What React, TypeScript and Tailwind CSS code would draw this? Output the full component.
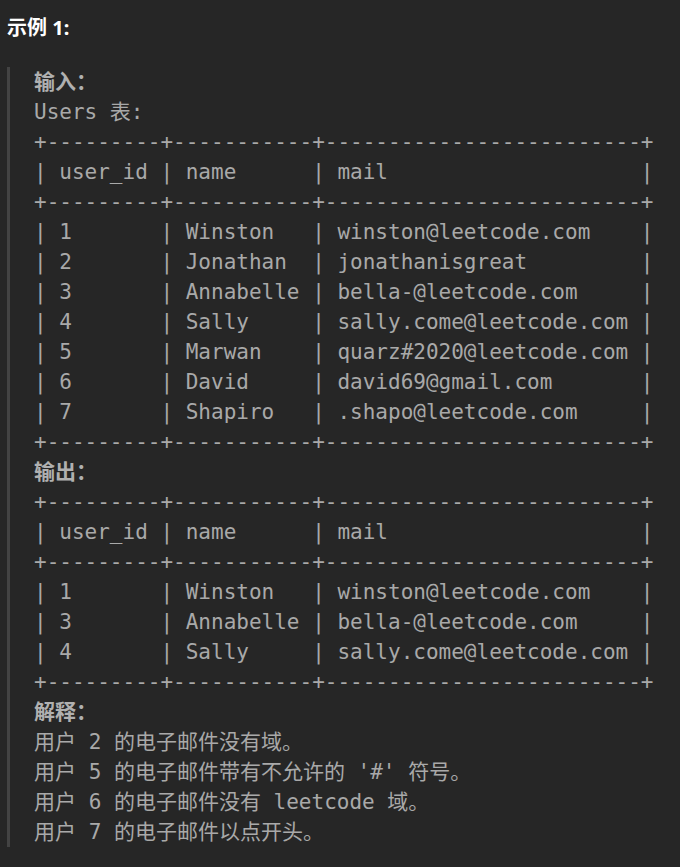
import { type FC } from 'react'

const border = '+---------+-----------+-------------------------+'

const inputRows = [
  '| 1       | Winston   | winston@leetcode.com    |',
  '| 2       | Jonathan  | jonathanisgreat         |',
  '| 3       | Annabelle | bella-@leetcode.com     |',
  '| 4       | Sally     | sally.come@leetcode.com |',
  '| 5       | Marwan    | quarz#2020@leetcode.com |',
  '| 6       | David     | david69@gmail.com       |',
  '| 7       | Shapiro   | .shapo@leetcode.com     |',
]

const outputRows = [
  '| 1       | Winston   | winston@leetcode.com    |',
  '| 3       | Annabelle | bella-@leetcode.com     |',
  '| 4       | Sally     | sally.come@leetcode.com |',
]

const header = '| user_id | name      | mail                    |'

const notes = [
  '用户 2 的电子邮件没有域。',
  "用户 5 的电子邮件带有不允许的 '#' 符号。",
  '用户 6 的电子邮件没有 leetcode 域。',
  '用户 7 的电子邮件以点开头。',
]

const Table: FC<{ rows: string[] }> = ({ rows }) => (
  <>
    {border + '\n'}
    {header + '\n'}
    {border + '\n'}
    {rows.map((row) => row + '\n')}
    {border + '\n'}
  </>
)

export default function App() {
  return (
    <div className="min-h-screen bg-[#262626] pl-[7px] pt-[14px]">
      <p className="font-['Noto_Sans','Noto_Sans_CJK_SC',sans-serif] text-[20px] leading-[28px] font-bold text-white">
        示例 1:
      </p>
      <div className="mt-[25px] border-l-[3px] border-[#434343] pl-[24px]">
        <pre className="font-['DejaVu_Sans_Mono','Noto_Sans_CJK_SC',monospace] text-[21px] leading-[30px] text-[#a9a9a9]">
          <strong className="font-bold text-[#b0b0b0]">输入：</strong>
          {'\n'}
          {'Users 表:\n'}
          <Table rows={inputRows} />
          <strong className="font-bold text-[#b0b0b0]">输出：</strong>
          {'\n'}
          <Table rows={outputRows} />
          <strong className="font-bold text-[#b0b0b0]">解释：</strong>
          {'\n'}
          {notes.join('\n')}
        </pre>
      </div>
    </div>
  )
}
